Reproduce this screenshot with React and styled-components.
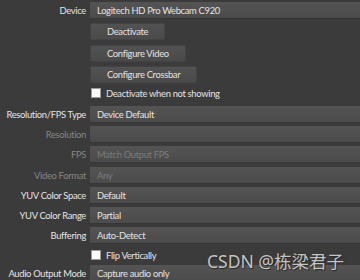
import { Fragment } from "react";
import styled, { createGlobalStyle } from "styled-components";

const GlobalStyle = createGlobalStyle`
  html, body {
    margin: 0;
    padding: 0;
    background: #3b3b3b;
    overflow: hidden;
  }
  body {
    font-family: Lato, "Noto Sans", sans-serif;
    font-size: 9.4px;
    letter-spacing: -0.32px;
    color: #e4e4e4;
  }
`;

const Page = styled.div`
  position: relative;
  width: 360px;
  height: 280px;
  overflow: hidden;
  background: #3b3b3b;
`;

const Form = styled.div`
  display: grid;
  grid-template-columns: 86px 300px;
  column-gap: 4px;
  padding-top: 2px;
`;

const Label = styled.div`
  height: ${(p) => p.$h}px;
  line-height: 17px;
  text-align: right;
  color: ${(p) => (p.$disabled ? "#868686" : "#e4e4e4")};
  white-space: nowrap;
`;

const Cell = styled.div`
  height: ${(p) => p.$h}px;
  display: flex;
  align-items: flex-start;
`;

const Combo = styled.div`
  box-sizing: border-box;
  width: 100%;
  height: 17px;
  padding-left: 7px;
  display: flex;
  align-items: center;
  background: linear-gradient(#545454, #4b4b4b);
  border-bottom: 1px solid #363636;
  color: ${(p) => (p.$disabled ? "#7c7c7c" : "#e4e4e4")};
  white-space: nowrap;
`;

const Button = styled.div`
  box-sizing: border-box;
  height: 17px;
  padding: 0 16px;
  display: flex;
  align-items: center;
  background: linear-gradient(#525252, #4a4a4a);
  border: 1px solid #444;
  border-radius: 2px;
  white-space: nowrap;
`;

const Check = styled.label`
  display: flex;
  align-items: center;
  gap: 5px;
  margin-top: 1px;
  height: 10px;
  white-space: nowrap;
`;

const Box = styled.span`
  box-sizing: border-box;
  width: 10px;
  height: 10px;
  margin-left: 1px;
  background: #fcfcfc;
  border: 1px solid #9a9a9a;
`;

const Watermark = styled.div`
  position: absolute;
  left: 207px;
  top: 248px;
  font-family: "Noto Sans", "Noto Sans CJK SC", sans-serif;
  font-size: 17.5px;
  letter-spacing: 0;
  color: #c4c4c4;
  text-shadow: 0 0 1px #2a2a2a, 1px 1px 1px #2a2a2a;
  white-space: nowrap;
`;

const rows = [
  { label: "Device", h: 21, combo: "Logitech HD Pro Webcam C920" },
  { h: 22, button: "Deactivate" },
  { h: 21, button: "Configure Video" },
  { h: 21, button: "Configure Crossbar" },
  { h: 19, check: "Deactivate when not showing" },
  { label: "Resolution/FPS Type", h: 20, combo: "Device Default" },
  { label: "Resolution", h: 20, combo: "", disabled: true },
  { label: "FPS", h: 21, combo: "Match Output FPS", disabled: true },
  { label: "Video Format", h: 20, combo: "Any", disabled: true },
  { label: "YUV Color Space", h: 20, combo: "Default" },
  { label: "YUV Color Range", h: 20, combo: "Partial" },
  { label: "Buffering", h: 22, combo: "Auto-Detect" },
  { h: 16, check: "Flip Vertically" },
  { label: "Audio Output Mode", h: 20, combo: "Capture audio only" },
];

export default function App() {
  return (
    <Page>
      <GlobalStyle />
      <Form>
        {rows.map((r, i) => (
          <Fragment key={i}>
            <Label $h={r.h} $disabled={r.disabled}>
              {r.label}
            </Label>
            <Cell $h={r.h}>
              {r.combo !== undefined && <Combo $disabled={r.disabled}>{r.combo}</Combo>}
              {r.button && <Button>{r.button}</Button>}
              {r.check && (
                <Check>
                  <Box />
                  {r.check}
                </Check>
              )}
            </Cell>
          </Fragment>
        ))}
      </Form>
      <Watermark>CSDN @栋梁君子</Watermark>
    </Page>
  );
}
